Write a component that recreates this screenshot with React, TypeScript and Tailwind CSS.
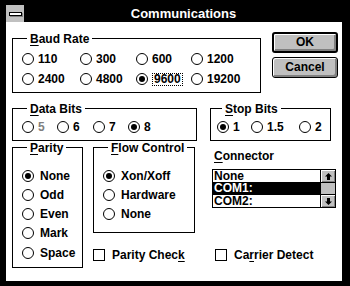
import React from "react";

function Radio({
  label,
  checked = false,
  disabled = false,
  focus = false,
  gap = "gap-[4px]",
}: {
  label: string;
  checked?: boolean;
  disabled?: boolean;
  focus?: boolean;
  gap?: string;
}) {
  return (
    <div className={`flex items-center h-full ${gap}`}>
      <span className="w-[12px] h-[12px] rounded-full border border-black bg-white flex items-center justify-center shrink-0">
        {checked && <span className="w-[6px] h-[6px] rounded-full bg-black" />}
      </span>
      <span
        className={`${disabled ? "text-[#808080]" : "text-black"} ${
          focus ? "border border-dotted border-black px-[1px] leading-[11px]" : "leading-[14px]"
        } whitespace-nowrap`}
      >
        {label}
      </span>
    </div>
  );
}

function Legend({ first, rest }: { first: string; rest: string }) {
  return (
    <legend className="ml-[5px] px-[3px] leading-[13px]">
      <span className="inline-block translate-y-[1px]">
        <span className="underline underline-offset-[2px]">{first}</span>
        {rest}
      </span>
    </legend>
  );
}

function Check({ children }: { children: React.ReactNode }) {
  return (
    <div className="flex items-center h-[20px] gap-[7px]">
      <span className="w-[12px] h-[12px] border border-black bg-white shrink-0" />
      <span className="leading-[14px] whitespace-nowrap">{children}</span>
    </div>
  );
}

function Arrow({ down = false }: { down?: boolean }) {
  return (
    <svg width="7" height="7" viewBox="0 0 7 7" className={down ? "rotate-180" : ""}>
      <path d="M3.5 0 L7 3.5 H5 V7 H2 V3.5 H0 Z" fill="#000" />
    </svg>
  );
}

function ScrollBtn({ down = false }: { down?: boolean }) {
  return (
    <div
      className={`h-[13px] bg-[#c0c0c0] flex items-center justify-center shadow-[inset_1px_1px_0_#fff,inset_-1px_-1px_0_#808080] ${
        down ? "border-t border-black" : "border-b border-black"
      }`}
    >
      <Arrow down={down} />
    </div>
  );
}

export default function App() {
  return (
    <div className="w-[350px] h-[286px] bg-black pt-[5px] pl-[6px] pr-[8px] pb-[5px] flex flex-col font-['Liberation_Sans',Arial,sans-serif] font-bold text-[12px] text-black overflow-hidden">
      {/* Title bar */}
      <div className="h-[17px] flex shrink-0">
        <div className="w-[19px] h-full bg-[#c0c0c0] border-r border-black flex items-center justify-center">
          <div className="w-[13px] h-[4px] bg-white border border-black shadow-[1px_1px_0_#808080]" />
        </div>
        <div className="flex-1 flex items-center justify-center text-white text-[13px] leading-[17px]">
          Communications
        </div>
      </div>

      {/* Client area */}
      <div className="flex-1 bg-white flex flex-col">
        {/* Row A */}
        <div className="flex items-start mt-[10px]">
          <fieldset className="ml-[6px] w-[249px] h-[61px] border border-black pl-[9px] pt-[4px]">
            <Legend first="B" rest="aud Rate" />
            <div className="grid grid-cols-[58px_56px_55px_auto] grid-rows-[20px_20px]">
              <Radio label="110" />
              <Radio label="300" />
              <Radio label="600" />
              <Radio label="1200" />
              <Radio label="2400" />
              <Radio label="4800" />
              <Radio label="9600" checked focus />
              <Radio label="19200" />
            </div>
          </fieldset>
          <div className="ml-[11px] flex flex-col">
            <button className="w-[66px] h-[21px] border-2 border-black rounded-[3px] bg-[#c0c0c0] shadow-[inset_1px_1px_0_#fff,inset_-2px_-2px_0_#808080] font-bold text-[12px] leading-[17px]">
              OK
            </button>
            <button className="mt-[4px] w-[66px] h-[21px] border border-black rounded-[3px] bg-[#c0c0c0] shadow-[inset_1px_1px_0_#fff,inset_-2px_-2px_0_#808080] font-bold text-[12px] leading-[19px]">
              Cancel
            </button>
          </div>
        </div>

        {/* Row B */}
        <div className="flex items-start mt-[9px]">
          <fieldset className="ml-[6px] w-[185px] h-[39px] border border-black pl-[9px] pt-[2px]">
            <Legend first="D" rest="ata Bits" />
            <div className="grid grid-cols-[35px_36px_35px_auto] grid-rows-[20px]">
              <Radio label="5" disabled />
              <Radio label="6" />
              <Radio label="7" />
              <Radio label="8" checked />
            </div>
          </fieldset>
          <fieldset className="ml-[13px] w-[121px] h-[39px] border border-black pl-[6px] pt-[2px]">
            <Legend first="S" rest="top Bits" />
            <div className="grid grid-cols-[34px_48px_auto] grid-rows-[20px]">
              <Radio label="1" checked />
              <Radio label="1.5" />
              <Radio label="2" />
            </div>
          </fieldset>
        </div>

        {/* Row C */}
        <div className="flex items-start">
          <fieldset className="ml-[6px] w-[71px] h-[127px] border border-black pl-[9px] pt-[12px]">
            <Legend first="P" rest="arity" />
            <div className="flex flex-col">
              {["None", "Odd", "Even", "Mark", "Space"].map((l, i) => (
                <div key={l} className="h-[19.25px]">
                  <Radio label={l} checked={i === 0} gap="gap-[6px]" />
                </div>
              ))}
            </div>
          </fieldset>

          <div className="ml-[10px] flex flex-col w-[102px]">
            <fieldset className="w-[102px] h-[92px] border border-black pl-[9px] pt-[12px]">
              <Legend first="F" rest="low Control" />
              <div className="flex flex-col">
                {["Xon/Xoff", "Hardware", "None"].map((l, i) => (
                  <div key={l} className="h-[19.25px]">
                    <Radio label={l} checked={i === 0} gap="gap-[6px]" />
                  </div>
                ))}
              </div>
            </fieldset>
            <div className="mt-[12px]">
              <Check>
                Parity Chec<span className="underline underline-offset-[2px]">k</span>
              </Check>
            </div>
          </div>

          <div className="ml-[17px] flex flex-col w-[124px]">
            <div className="mt-[8px] ml-[2px] h-[14px] leading-[14px]">
              <span className="underline underline-offset-[2px]">C</span>onnector
            </div>
            <div className="mt-[6px] w-[124px] h-[39px] border border-black flex bg-white">
              <div className="flex-1 flex flex-col">
                <div className="h-[12px] leading-[12px] pl-[1px]">None</div>
                <div className="h-[13px] leading-[13px] bg-black text-white pl-[1px]">COM1:</div>
                <div className="h-[12px] leading-[12px] pl-[1px]">COM2:</div>
              </div>
              <div className="w-[15px] border-l border-black flex flex-col">
                <ScrollBtn />
                <div className="flex-1 bg-[#c0c0c0]" />
                <ScrollBtn down />
              </div>
            </div>
            <div className="mt-[37px] ml-[3px]">
              <Check>
                Ca<span className="underline underline-offset-[2px]">r</span>rier Detect
              </Check>
            </div>
          </div>
        </div>
      </div>
    </div>
  );
}
